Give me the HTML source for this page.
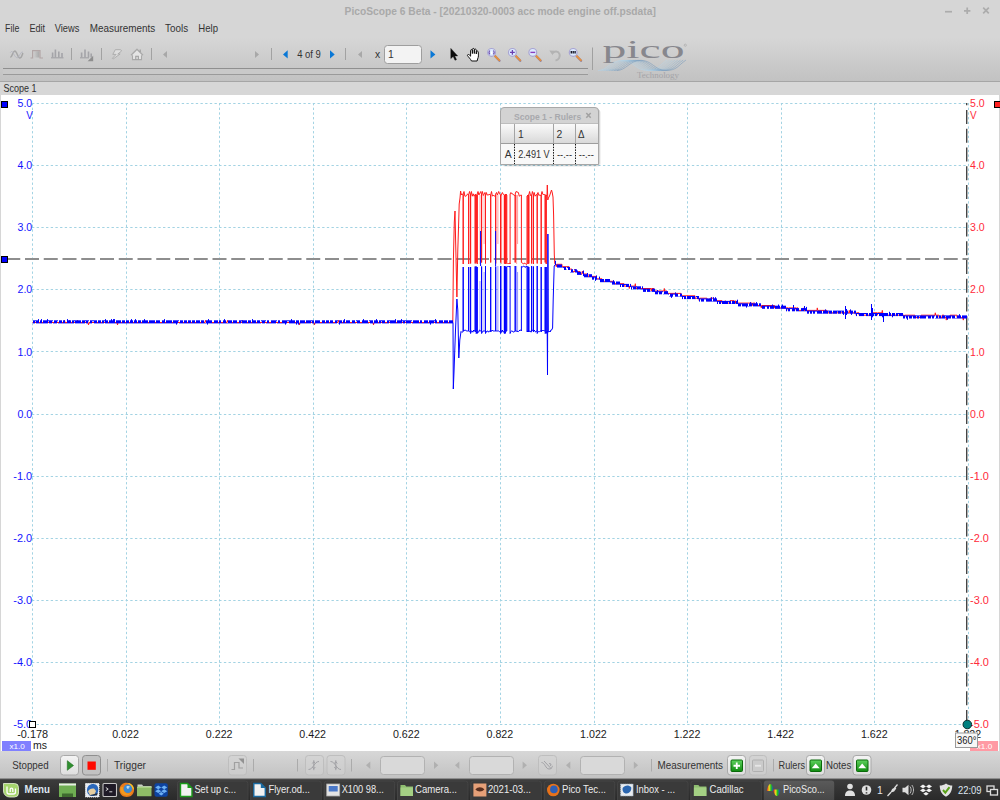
<!DOCTYPE html>
<html><head><meta charset="utf-8"><title>PicoScope 6 Beta</title>
<style>
html,body{margin:0;padding:0;background:#d6d6d6;}
body{width:1000px;height:800px;overflow:hidden;position:relative;font-family:"Liberation Sans",sans-serif;}
svg{position:absolute;left:0;top:0;display:block;font-family:"Liberation Sans",sans-serif;}
</style></head><body>
<svg width="1000" height="800" viewBox="0 0 1000 800">
<rect x="0" y="0" width="1000" height="800" fill="#d6d6d6"/>
<defs><linearGradient id="tb" x1="0" y1="0" x2="0" y2="1"><stop offset="0" stop-color="#d6d6d6"/><stop offset="1" stop-color="#c2c2c2"/></linearGradient><linearGradient id="sb" x1="0" y1="0" x2="0" y2="1"><stop offset="0" stop-color="#d7d7d7"/><stop offset="1" stop-color="#c1c1c1"/></linearGradient><linearGradient id="hd" x1="0" y1="0" x2="0" y2="1"><stop offset="0" stop-color="#fafafa"/><stop offset="1" stop-color="#d9d9d9"/></linearGradient><linearGradient id="btn" x1="0" y1="0" x2="0" y2="1"><stop offset="0" stop-color="#f4f4f4"/><stop offset="1" stop-color="#dedede"/></linearGradient><linearGradient id="rb" x1="0" y1="0" x2="1" y2="0"><stop offset="0" stop-color="#e02020"/><stop offset=".35" stop-color="#e8e020"/><stop offset=".6" stop-color="#20c020"/><stop offset="1" stop-color="#2030e0"/></linearGradient><linearGradient id="ab" x1="0" y1="0" x2="0" y2="1"><stop offset="0" stop-color="#5a5a5a"/><stop offset="1" stop-color="#474747"/></linearGradient><linearGradient id="sq" x1="0" y1="0" x2="1" y2="0"><stop offset="0" stop-color="#d0d0d0"/><stop offset="1" stop-color="#a8a8a8"/></linearGradient><linearGradient id="tk" x1="0" y1="0" x2="0" y2="1"><stop offset="0" stop-color="#3c3c3c"/><stop offset="1" stop-color="#2a2a2a"/></linearGradient><linearGradient id="grn" x1="0" y1="0" x2="0" y2="1"><stop offset="0" stop-color="#5fd35f"/><stop offset="1" stop-color="#0f8a0f"/></linearGradient></defs>
<rect x="0" y="38" width="1000" height="43" fill="url(#tb)"/>
<rect x="0" y="81" width="1000" height="1" fill="#a6a6a6"/>
<rect x="0" y="82" width="1000" height="13" fill="#d7d7d7"/>
<rect x="3" y="68" width="585" height="1" fill="#8f8f8f"/>
<rect x="3" y="69" width="585" height="5" fill="#c9c9c9"/>
<rect x="3" y="74" width="585" height="1" fill="#9a9a9a"/>
<rect x="1" y="95" width="998" height="656" fill="#ffffff"/>
<rect x="0" y="751" width="1000" height="29" fill="url(#sb)"/>
<rect x="0" y="778" width="1000" height="1" fill="#8e8e8e"/>
<rect x="0" y="779" width="1000" height="21" fill="url(#tk)"/>
<rect x="0" y="779" width="1000" height="1" fill="#4a4a4a"/>
<text x="344.6" y="15.1" font-size="10" fill="#a9a9a9" textLength="311.2" lengthAdjust="spacingAndGlyphs" font-weight="bold" >PicoScope 6 Beta - [20210320-0003 acc mode engine off.psdata]</text>
<g stroke="#acacac" stroke-width="1.7" fill="none"><path d="M945 11.7h7"/><path d="M964 10.8h6.4M967.2 7.6v6.4"/><path d="M983.2 7.7l5.6 5.6M988.8 7.7l-5.6 5.6"/></g>
<text x="5.1" y="31.8" font-size="10.4" fill="#333333" textLength="14.2" lengthAdjust="spacingAndGlyphs" >File</text>
<text x="29.4" y="31.8" font-size="10.4" fill="#333333" textLength="15.7" lengthAdjust="spacingAndGlyphs" >Edit</text>
<text x="54.7" y="31.8" font-size="10.4" fill="#333333" textLength="24.6" lengthAdjust="spacingAndGlyphs" >Views</text>
<text x="89.7" y="31.8" font-size="10.4" fill="#333333" textLength="65.5" lengthAdjust="spacingAndGlyphs" >Measurements</text>
<text x="165.1" y="31.8" font-size="10.4" fill="#333333" textLength="23.0" lengthAdjust="spacingAndGlyphs" >Tools</text>
<text x="198.3" y="31.8" font-size="10.4" fill="#333333" textLength="19.7" lengthAdjust="spacingAndGlyphs" >Help</text>
<text x="3.5" y="92.3" font-size="10.4" fill="#2e2e2e" textLength="33" lengthAdjust="spacingAndGlyphs" >Scope 1</text>
<g stroke="#a3d3e3" stroke-width="1" stroke-dasharray="2.34 2.34" fill="none"><path d="M32.0 103.5H969.0"/><path d="M32.0 165.5H969.0"/><path d="M32.0 227.5H969.0"/><path d="M32.0 289.5H969.0"/><path d="M32.0 351.5H969.0"/><path d="M32.0 414.5H969.0"/><path d="M32.0 476.5H969.0"/><path d="M32.0 538.5H969.0"/><path d="M32.0 600.5H969.0"/><path d="M32.0 662.5H969.0"/><path d="M32.0 724.5H969.0"/><path d="M32.5 103.0V725.0"/><path d="M126.5 103.0V725.0"/><path d="M219.5 103.0V725.0"/><path d="M313.5 103.0V725.0"/><path d="M406.5 103.0V725.0"/><path d="M500.5 103.0V725.0"/><path d="M594.5 103.0V725.0"/><path d="M687.5 103.0V725.0"/><path d="M781.5 103.0V725.0"/><path d="M874.5 103.0V725.0"/><path d="M968.5 103.0V725.0"/></g>
<text x="17.500000000000004" y="107.1" font-size="10.2" fill="#1414ff" textLength="14.7" lengthAdjust="spacingAndGlyphs" >5.0</text>
<text x="970" y="107.1" font-size="10.2" fill="#ff2a3a" textLength="14.7" lengthAdjust="spacingAndGlyphs" >5.0</text>
<text x="17.500000000000004" y="169.2" font-size="10.2" fill="#1414ff" textLength="14.7" lengthAdjust="spacingAndGlyphs" >4.0</text>
<text x="970" y="169.2" font-size="10.2" fill="#ff2a3a" textLength="14.7" lengthAdjust="spacingAndGlyphs" >4.0</text>
<text x="17.500000000000004" y="231.3" font-size="10.2" fill="#1414ff" textLength="14.7" lengthAdjust="spacingAndGlyphs" >3.0</text>
<text x="970" y="231.3" font-size="10.2" fill="#ff2a3a" textLength="14.7" lengthAdjust="spacingAndGlyphs" >3.0</text>
<text x="17.500000000000004" y="293.4" font-size="10.2" fill="#1414ff" textLength="14.7" lengthAdjust="spacingAndGlyphs" >2.0</text>
<text x="970" y="293.4" font-size="10.2" fill="#ff2a3a" textLength="14.7" lengthAdjust="spacingAndGlyphs" >2.0</text>
<text x="17.500000000000004" y="355.5" font-size="10.2" fill="#1414ff" textLength="14.7" lengthAdjust="spacingAndGlyphs" >1.0</text>
<text x="970" y="355.5" font-size="10.2" fill="#ff2a3a" textLength="14.7" lengthAdjust="spacingAndGlyphs" >1.0</text>
<text x="17.500000000000004" y="417.6" font-size="10.2" fill="#1414ff" textLength="14.7" lengthAdjust="spacingAndGlyphs" >0.0</text>
<text x="970" y="417.6" font-size="10.2" fill="#ff2a3a" textLength="14.7" lengthAdjust="spacingAndGlyphs" >0.0</text>
<text x="13.300000000000004" y="479.7" font-size="10.2" fill="#1414ff" textLength="18.9" lengthAdjust="spacingAndGlyphs" >-1.0</text>
<text x="970" y="479.7" font-size="10.2" fill="#ff2a3a" textLength="18.9" lengthAdjust="spacingAndGlyphs" >-1.0</text>
<text x="13.300000000000004" y="541.8" font-size="10.2" fill="#1414ff" textLength="18.9" lengthAdjust="spacingAndGlyphs" >-2.0</text>
<text x="970" y="541.8" font-size="10.2" fill="#ff2a3a" textLength="18.9" lengthAdjust="spacingAndGlyphs" >-2.0</text>
<text x="13.300000000000004" y="603.9" font-size="10.2" fill="#1414ff" textLength="18.9" lengthAdjust="spacingAndGlyphs" >-3.0</text>
<text x="970" y="603.9" font-size="10.2" fill="#ff2a3a" textLength="18.9" lengthAdjust="spacingAndGlyphs" >-3.0</text>
<text x="13.300000000000004" y="666.0" font-size="10.2" fill="#1414ff" textLength="18.9" lengthAdjust="spacingAndGlyphs" >-4.0</text>
<text x="970" y="666.0" font-size="10.2" fill="#ff2a3a" textLength="18.9" lengthAdjust="spacingAndGlyphs" >-4.0</text>
<text x="13.300000000000004" y="728.1" font-size="10.2" fill="#1414ff" textLength="18.9" lengthAdjust="spacingAndGlyphs" >-5.0</text>
<text x="970" y="728.1" font-size="10.2" fill="#ff2a3a" textLength="18.9" lengthAdjust="spacingAndGlyphs" >-5.0</text>
<text x="26.3" y="118.8" font-size="10.2" fill="#1414ff" textLength="6.6" lengthAdjust="spacingAndGlyphs" >V</text>
<text x="970" y="118.8" font-size="10.2" fill="#ff2a3a" textLength="6.6" lengthAdjust="spacingAndGlyphs" >V</text>
<text x="17.2" y="738.2" font-size="10.2" fill="#1a1a1a" textLength="30.9" lengthAdjust="spacingAndGlyphs" >-0.178</text>
<text x="112.2" y="738.2" font-size="10.2" fill="#1a1a1a" textLength="26.7" lengthAdjust="spacingAndGlyphs" >0.022</text>
<text x="205.8" y="738.2" font-size="10.2" fill="#1a1a1a" textLength="26.7" lengthAdjust="spacingAndGlyphs" >0.222</text>
<text x="299.3" y="738.2" font-size="10.2" fill="#1a1a1a" textLength="26.7" lengthAdjust="spacingAndGlyphs" >0.422</text>
<text x="392.9" y="738.2" font-size="10.2" fill="#1a1a1a" textLength="26.7" lengthAdjust="spacingAndGlyphs" >0.622</text>
<text x="486.5" y="738.2" font-size="10.2" fill="#1a1a1a" textLength="26.7" lengthAdjust="spacingAndGlyphs" >0.822</text>
<text x="580.1" y="738.2" font-size="10.2" fill="#1a1a1a" textLength="26.7" lengthAdjust="spacingAndGlyphs" >1.022</text>
<text x="673.7" y="738.2" font-size="10.2" fill="#1a1a1a" textLength="26.7" lengthAdjust="spacingAndGlyphs" >1.222</text>
<text x="767.3" y="738.2" font-size="10.2" fill="#1a1a1a" textLength="26.7" lengthAdjust="spacingAndGlyphs" >1.422</text>
<text x="860.9" y="738.2" font-size="10.2" fill="#1a1a1a" textLength="26.7" lengthAdjust="spacingAndGlyphs" >1.622</text>
<text x="954.5" y="738.2" font-size="10.2" fill="#1a1a1a" textLength="26.7" lengthAdjust="spacingAndGlyphs" >1.822</text>
<text x="33" y="748.8" font-size="10.2" fill="#1a1a1a" textLength="14" lengthAdjust="spacingAndGlyphs" >ms</text>
<rect x="2" y="741" width="29" height="10" fill="#8080ff"/>
<text x="9.5" y="748.7" font-size="7.8" fill="#ffffff" textLength="15.4" lengthAdjust="spacingAndGlyphs" >x1.0</text>
<rect x="970" y="741" width="28" height="10" fill="#ff9aa4"/>
<text x="976.8" y="748.7" font-size="7.8" fill="#ffffff" textLength="15.4" lengthAdjust="spacingAndGlyphs" >x1.0</text>
<path d="M6.25 259H968.5" stroke="#8e8e8e" stroke-width="2" stroke-dasharray="14 4.75" fill="none"/>
<path d="M966.7 103V724" stroke="#454545" stroke-width="1.4" stroke-dasharray="14 4.75" stroke-dashoffset="11.75" fill="none"/>
<path d="M480.0 195.0V264.0M484.1 195.0V244.0M497.9 195.0V244.0M501.6 195.0V264.0M516.6 195.0V264.0M517.6 195.0V244.0" stroke="#ff1a1a" stroke-width="1" fill="none" opacity=".4"/>
<polyline fill="none" stroke="#ff1a1a" stroke-width="1" stroke-linejoin="miter" points="32.5,322.5 64.0,322.5 64.5,320.3 65.0,322.5 69.0,322.5 69.5,320.3 70.0,322.5 77.0,322.5 77.5,320.3 78.0,322.5 88.0,322.5 88.5,324.9 89.0,322.5 117.0,322.5 117.5,324.9 118.0,322.5 205.0,322.5 205.5,320.3 206.0,322.5 227.0,322.5 227.5,320.3 228.0,322.5 242.0,322.5 242.5,320.3 243.0,322.5 299.0,322.5 299.5,324.9 300.0,322.5 314.0,322.5 314.5,324.9 315.0,322.5 338.0,322.5 338.5,320.3 339.0,322.5 373.0,322.5 373.5,324.9 374.0,322.5 452.8,322.5 453.4,260.0 454.3,222.0 455.0,211.0 455.6,240.0 456.9,297.0 457.8,250.0 458.7,222.0 459.2,204.0 460.0,198.0 460.6,191.0 461.3,195.0 462.1,193.8 463.2,195.0 463.2,264.0 463.2,194.0 464.0,191.5 464.9,196.2 465.8,196.2 466.7,195.5 467.6,193.8 468.7,195.0 468.7,264.0 468.7,195.0 469.5,191.5 470.6,195.0 470.6,263.5 470.6,196.0 471.4,191.5 472.3,196.2 473.2,193.8 474.1,196.2 475.2,195.0 475.2,263.5 475.2,194.0 476.2,195.0 476.2,262.5 476.2,195.0 477.2,195.0 477.2,264.0 477.2,194.0 478.0,191.5 478.9,195.0 480.8,191.5 481.6,195.0 481.6,262.5 481.6,195.0 482.4,191.5 483.3,195.5 484.9,192.5 485.5,195.0 485.5,263.5 485.5,196.0 486.3,192.5 487.2,195.0 488.1,195.0 489.0,194.5 489.9,194.5 490.7,195.0 490.7,262.5 490.7,195.0 491.5,191.5 492.4,196.2 493.3,195.0 494.2,196.2 495.1,195.5 495.7,195.0 495.7,263.5 495.7,194.0 496.5,192.5 497.4,195.0 498.7,191.5 499.6,193.8 500.6,195.0 500.6,262.5 500.6,196.0 502.4,192.5 503.3,194.5 504.4,195.0 504.4,263.5 504.4,196.0 505.2,195.0 505.2,264.0 505.2,194.0 506.0,195.0 506.0,264.0 506.0,194.0 506.8,195.0 506.8,262.5 507.6,263.5 508.4,263.5 509.2,263.5 510.0,263.0 510.1,264.0 510.1,194.0 510.9,192.5 511.8,193.8 512.7,193.8 513.6,195.0 514.5,195.5 515.2,195.0 515.2,262.5 515.2,194.0 516.0,191.5 518.4,192.5 519.3,196.2 520.2,195.5 521.1,195.0 521.4,195.0 521.4,262.5 522.2,263.0 523.0,263.5 523.8,264.0 524.6,263.0 525.4,263.5 526.2,264.5 527.0,264.0 527.0,264.0 527.0,196.0 528.0,195.0 528.0,264.0 528.0,195.0 528.8,195.0 528.8,263.5 528.8,195.0 529.6,191.5 530.5,195.5 531.6,195.0 531.6,263.5 531.6,196.0 532.4,191.5 533.4,195.0 533.4,264.0 533.4,196.0 534.2,192.5 535.1,196.2 536.0,195.0 536.9,194.5 537.2,195.0 537.2,263.5 537.2,194.0 538.0,192.5 538.9,195.5 539.8,195.0 540.7,195.5 541.2,195.0 541.2,264.0 541.2,195.0 542.0,191.5 542.9,194.5 543.8,194.5 544.7,194.5 545.2,195.0 545.2,262.5 545.2,195.0 546.2,195.0 546.2,264.0 546.2,196.0 547.0,195.0 547.3,185.0 547.8,200.0 548.4,198.0 549.5,196.0 550.5,193.0 551.5,190.0 552.3,193.0 553.0,197.0 553.6,215.0 554.3,255.0 554.8,263.5 555.0,264.3 556.0,264.3 556.3,266.7 556.6,264.3 557.0,264.3 558.0,264.3 559.0,264.3 560.0,264.3 561.0,264.3 562.0,264.3 562.0,266.7 563.0,266.7 564.0,266.7 565.0,266.7 566.0,266.7 567.0,266.7 568.0,266.7 569.0,266.7 569.0,269.1 570.0,269.1 571.0,269.1 572.0,269.1 572.0,271.6 573.0,271.6 574.0,271.6 575.0,271.6 575.3,269.1 575.6,271.6 576.0,271.6 577.0,271.6 578.0,271.6 579.0,271.6 580.0,271.6 580.0,274.0 581.0,274.0 582.0,274.0 582.0,271.6 583.0,271.6 583.0,274.0 584.0,274.0 585.0,274.0 586.0,274.0 587.0,274.0 588.0,274.0 588.0,276.4 589.0,276.4 590.0,276.4 591.0,276.4 592.0,276.4 593.0,276.4 594.0,276.4 595.0,276.4 596.0,276.4 596.0,278.8 597.0,278.8 598.0,278.8 599.0,278.8 600.0,278.8 601.0,278.8 602.0,278.8 602.0,281.3 603.0,281.3 604.0,281.3 605.0,281.3 606.0,281.3 607.0,281.3 608.0,281.3 609.0,281.3 610.0,281.3 611.0,281.3 612.0,281.3 613.0,281.3 614.0,281.3 614.0,283.7 615.0,283.7 616.0,283.7 617.0,283.7 618.0,283.7 619.0,283.7 620.0,283.7 621.0,283.7 622.0,283.7 623.0,283.7 624.0,283.7 624.0,286.1 625.0,286.1 626.0,286.1 627.0,286.1 628.0,286.1 629.0,286.1 629.3,288.5 629.6,286.1 630.0,286.1 631.0,286.1 632.0,286.1 633.0,286.1 634.0,286.1 635.0,286.1 635.3,283.7 635.6,286.1 636.0,286.1 636.0,288.5 637.0,288.5 638.0,288.5 639.0,288.5 640.0,288.5 641.0,288.5 642.0,288.5 643.0,288.5 644.0,288.5 645.0,288.5 646.0,288.5 647.0,288.5 648.0,288.5 649.0,288.5 650.0,288.5 651.0,288.5 651.3,291.0 651.6,288.5 652.0,288.5 653.0,288.5 654.0,288.5 654.0,291.0 655.0,291.0 656.0,291.0 657.0,291.0 658.0,291.0 659.0,291.0 660.0,291.0 661.0,291.0 662.0,291.0 663.0,291.0 664.0,291.0 664.3,288.5 664.6,291.0 665.0,291.0 666.0,291.0 667.0,291.0 667.0,293.4 668.0,293.4 669.0,293.4 670.0,293.4 671.0,293.4 672.0,293.4 673.0,293.4 674.0,293.4 675.0,293.4 676.0,293.4 677.0,293.4 678.0,293.4 679.0,293.4 680.0,293.4 681.0,293.4 681.0,295.8 682.0,295.8 683.0,295.8 684.0,295.8 685.0,295.8 686.0,295.8 687.0,295.8 688.0,295.8 689.0,295.8 690.0,295.8 691.0,295.8 692.0,295.8 693.0,295.8 694.0,295.8 695.0,295.8 695.0,298.2 696.0,298.2 697.0,298.2 698.0,298.2 699.0,298.2 699.3,300.7 699.6,298.2 700.0,298.2 701.0,298.2 702.0,298.2 703.0,298.2 704.0,298.2 705.0,298.2 706.0,298.2 707.0,298.2 707.0,300.7 708.0,300.7 709.0,300.7 710.0,300.7 710.0,298.2 711.0,298.2 712.0,298.2 713.0,298.2 714.0,298.2 714.0,300.7 715.0,300.7 716.0,300.7 717.0,300.7 718.0,300.7 719.0,300.7 720.0,300.7 721.0,300.7 722.0,300.7 722.0,303.1 723.0,303.1 724.0,303.1 725.0,303.1 725.3,300.7 725.6,303.1 726.0,303.1 727.0,303.1 728.0,303.1 729.0,303.1 730.0,303.1 730.0,300.7 731.0,300.7 732.0,300.7 733.0,300.7 734.0,300.7 734.0,303.1 735.0,303.1 735.3,300.7 735.6,303.1 736.0,303.1 737.0,303.1 738.0,303.1 739.0,303.1 740.0,303.1 741.0,303.1 742.0,303.1 743.0,303.1 744.0,303.1 745.0,303.1 746.0,303.1 747.0,303.1 748.0,303.1 749.0,303.1 750.0,303.1 751.0,303.1 752.0,303.1 752.3,305.5 752.6,303.1 753.0,303.1 754.0,303.1 755.0,303.1 755.0,305.5 756.0,305.5 757.0,305.5 758.0,305.5 759.0,305.5 760.0,305.5 761.0,305.5 761.3,307.9 761.6,305.5 762.0,305.5 763.0,305.5 764.0,305.5 765.0,305.5 766.0,305.5 767.0,305.5 768.0,305.5 769.0,305.5 770.0,305.5 771.0,305.5 772.0,305.5 772.3,307.9 772.6,305.5 773.0,305.5 774.0,305.5 774.0,307.9 774.3,305.5 774.6,307.9 775.0,307.9 776.0,307.9 777.0,307.9 778.0,307.9 779.0,307.9 780.0,307.9 781.0,307.9 782.0,307.9 783.0,307.9 784.0,307.9 785.0,307.9 786.0,307.9 787.0,307.9 788.0,307.9 788.3,310.4 788.6,307.9 789.0,307.9 790.0,307.9 791.0,307.9 792.0,307.9 793.0,307.9 794.0,307.9 795.0,307.9 796.0,307.9 796.3,310.4 796.6,307.9 797.0,307.9 798.0,307.9 798.0,310.4 799.0,310.4 800.0,310.4 801.0,310.4 802.0,310.4 803.0,310.4 803.3,307.9 803.6,310.4 804.0,310.4 805.0,310.4 806.0,310.4 807.0,310.4 808.0,310.4 809.0,310.4 810.0,310.4 811.0,310.4 812.0,310.4 813.0,310.4 814.0,310.4 815.0,310.4 816.0,310.4 817.0,310.4 817.3,307.9 817.6,310.4 818.0,310.4 819.0,310.4 820.0,310.4 821.0,310.4 822.0,310.4 823.0,310.4 824.0,310.4 825.0,310.4 826.0,310.4 827.0,310.4 827.0,312.8 828.0,312.8 829.0,312.8 830.0,312.8 831.0,312.8 832.0,312.8 833.0,312.8 834.0,312.8 835.0,312.8 836.0,312.8 837.0,312.8 838.0,312.8 839.0,312.8 840.0,312.8 841.0,312.8 842.0,312.8 843.0,312.8 844.0,312.8 845.0,312.8 846.0,312.8 847.0,312.8 848.0,312.8 849.0,312.8 849.3,310.4 849.6,312.8 850.0,312.8 851.0,312.8 852.0,312.8 853.0,312.8 854.0,312.8 855.0,312.8 856.0,312.8 856.3,315.2 856.6,312.8 857.0,312.8 858.0,312.8 859.0,312.8 859.0,315.2 860.0,315.2 861.0,315.2 862.0,315.2 863.0,315.2 864.0,315.2 865.0,315.2 866.0,315.2 867.0,315.2 868.0,315.2 869.0,315.2 870.0,315.2 871.0,315.2 872.0,315.2 873.0,315.2 873.0,312.8 874.0,312.8 875.0,312.8 876.0,312.8 877.0,312.8 877.3,315.2 877.6,312.8 878.0,312.8 879.0,312.8 880.0,312.8 881.0,312.8 882.0,312.8 882.3,310.4 882.6,312.8 883.0,312.8 883.0,315.2 884.0,315.2 885.0,315.2 886.0,315.2 887.0,315.2 888.0,315.2 889.0,315.2 890.0,315.2 891.0,315.2 892.0,315.2 893.0,315.2 894.0,315.2 895.0,315.2 896.0,315.2 897.0,315.2 898.0,315.2 899.0,315.2 900.0,315.2 901.0,315.2 902.0,315.2 903.0,315.2 904.0,315.2 904.3,317.6 904.6,315.2 905.0,315.2 906.0,315.2 907.0,315.2 908.0,315.2 909.0,315.2 910.0,315.2 911.0,315.2 912.0,315.2 913.0,315.2 914.0,315.2 915.0,315.2 915.0,317.6 916.0,317.6 917.0,317.6 918.0,317.6 919.0,317.6 920.0,317.6 921.0,317.6 921.0,315.2 922.0,315.2 923.0,315.2 924.0,315.2 925.0,315.2 926.0,315.2 927.0,315.2 928.0,315.2 929.0,315.2 930.0,315.2 931.0,315.2 932.0,315.2 933.0,315.2 934.0,315.2 935.0,315.2 935.3,312.8 935.6,315.2 936.0,315.2 937.0,315.2 938.0,315.2 939.0,315.2 939.0,317.6 940.0,317.6 941.0,317.6 942.0,317.6 942.0,315.2 943.0,315.2 944.0,315.2 944.0,317.6 945.0,317.6 946.0,317.6 946.3,320.1 946.6,317.6 947.0,317.6 948.0,317.6 949.0,317.6 950.0,317.6 950.0,315.2 951.0,315.2 952.0,315.2 953.0,315.2 954.0,315.2 955.0,315.2 956.0,315.2 957.0,315.2 957.0,317.6 958.0,317.6 959.0,317.6 960.0,317.6 961.0,317.6 962.0,317.6 963.0,317.6 963.3,320.1 963.6,317.6 964.0,317.6 965.0,317.6 966.0,317.6 967.0,317.6"/>
<path fill="none" stroke="#0000ff" stroke-width="1" d="M33.5 320.3V323.4M34.5 320.3V323.4M35.5 320.3V321.3M36.5 320.3V323.4M37.5 320.3V323.4M38.5 319.1V323.4M39.5 323.0V323.4M40.5 320.3V323.4M41.5 319.1V323.4M42.5 323.0V323.4M43.5 320.3V323.4M44.5 320.3V323.4M45.5 320.3V323.4M46.5 320.3V323.4M47.5 319.1V323.4M48.5 320.3V321.3M49.5 320.3V323.4M50.5 320.3V323.4M51.5 320.3V323.4M52.5 320.3V321.3M53.5 323.0V323.4M54.5 320.3V323.4M55.5 320.3V323.4M56.5 320.3V323.4M57.5 320.3V321.3M58.5 323.0V323.4M59.5 320.3V323.4M60.5 320.3V323.4M61.5 320.3V323.4M62.5 323.0V323.4M63.5 320.3V323.4M64.5 320.3V323.4M65.5 323.0V323.4M66.5 323.0V323.4M67.5 319.1V323.4M68.5 320.3V323.4M69.5 320.3V323.4M70.5 320.3V323.4M71.5 323.0V323.4M72.5 320.3V323.4M73.5 320.3V323.4M74.5 320.3V321.3M75.5 320.3V323.4M76.5 320.3V323.4M77.5 320.3V323.4M78.5 320.3V323.4M79.5 320.3V323.4M80.5 320.3V323.4M81.5 323.0V323.4M82.5 320.3V323.4M83.5 320.3V323.4M84.5 320.3V323.4M85.5 320.3V321.3M86.5 320.3V323.4M87.5 320.3V323.4M88.5 320.3V321.3M89.5 323.0V323.4M90.5 320.3V323.4M91.5 320.3V323.4M92.5 320.3V321.3M93.5 320.3V321.3M94.5 320.3V323.4M95.5 320.3V323.4M96.5 320.3V323.4M97.5 323.0V323.4M98.5 320.3V323.4M99.5 320.3V323.4M100.5 320.3V323.4M101.5 323.0V323.4M102.5 320.3V323.4M103.5 320.3V323.4M104.5 320.3V321.3M105.5 319.1V323.4M106.5 320.3V323.4M107.5 320.3V323.4M108.5 323.0V323.4M109.5 320.3V323.4M110.5 320.3V323.4M111.5 319.1V323.4M112.5 320.3V323.4M113.5 319.1V323.4M114.5 319.1V323.4M115.5 323.0V323.4M116.5 320.3V323.4M117.5 320.3V323.4M118.5 320.3V323.4M119.5 320.3V323.4M120.5 320.3V323.4M121.5 323.0V323.4M122.5 320.3V323.4M123.5 320.3V323.4M124.5 320.3V323.4M125.5 323.0V323.4M126.5 320.3V323.4M127.5 320.3V323.4M128.5 320.3V323.4M129.5 323.0V323.4M130.5 320.3V323.4M131.5 319.1V323.4M132.5 320.3V323.4M133.5 323.0V323.4M134.5 320.3V323.4M135.5 319.1V323.4M136.5 320.3V323.4M137.5 323.0V323.4M138.5 320.3V323.4M139.5 320.3V323.4M140.5 320.3V323.4M141.5 323.0V323.4M142.5 320.3V323.4M143.5 320.3V323.4M144.5 319.1V323.4M145.5 320.3V323.4M146.5 320.3V323.4M147.5 320.3V323.4M148.5 323.0V323.4M149.5 320.3V323.4M150.5 320.3V323.4M151.5 320.3V323.4M152.5 320.3V323.4M153.5 320.3V323.4M154.5 320.3V323.4M155.5 323.0V323.4M156.5 320.3V323.4M157.5 320.3V323.4M158.5 320.3V323.4M159.5 320.3V323.4M160.5 323.0V323.4M161.5 323.0V323.4M162.5 320.3V323.4M163.5 320.3V323.4M164.5 319.1V323.4M165.5 323.0V323.4M166.5 320.3V323.4M167.5 320.3V323.4M168.5 320.3V323.4M169.5 320.3V323.4M170.5 320.3V323.4M171.5 320.3V323.4M172.5 323.0V323.4M173.5 320.3V323.4M174.5 320.3V323.4M175.5 320.3V323.4M176.5 320.3V324.6M177.5 320.3V323.4M178.5 320.3V321.3M179.5 323.0V323.4M180.5 320.3V323.4M181.5 320.3V323.4M182.5 320.3V323.4M183.5 323.0V323.4M184.5 320.3V323.4M185.5 320.3V323.4M186.5 320.3V323.4M187.5 323.0V323.4M188.5 320.3V323.4M189.5 320.3V323.4M190.5 320.3V323.4M191.5 323.0V323.4M192.5 320.3V323.4M193.5 320.3V323.4M194.5 320.3V323.4M195.5 323.0V323.4M196.5 320.3V323.4M197.5 320.3V323.4M198.5 320.3V323.4M199.5 320.3V323.4M200.5 323.0V323.4M201.5 320.3V323.4M202.5 320.3V323.4M203.5 320.3V323.4M204.5 323.0V323.4M205.5 323.0V323.4M206.5 320.3V323.4M207.5 320.3V324.6M208.5 319.1V323.4M209.5 320.3V323.4M210.5 320.3V323.4M211.5 320.3V323.4M212.5 323.0V323.4M213.5 323.0V323.4M214.5 320.3V323.4M215.5 320.3V323.4M216.5 320.3V323.4M217.5 320.3V323.4M218.5 323.0V323.4M219.5 320.3V323.4M220.5 320.3V323.4M221.5 323.0V323.4M222.5 323.0V323.4M223.5 320.3V323.4M224.5 319.1V323.4M225.5 320.3V323.4M226.5 323.0V323.4M227.5 323.0V323.4M228.5 320.3V323.4M229.5 320.3V323.4M230.5 320.3V323.4M231.5 320.3V323.4M232.5 323.0V323.4M233.5 320.3V323.4M234.5 320.3V323.4M235.5 320.3V323.4M236.5 320.3V323.4M237.5 323.0V323.4M238.5 323.0V323.4M239.5 320.3V323.4M240.5 320.3V323.4M241.5 320.3V321.3M242.5 320.3V323.4M243.5 320.3V323.4M244.5 320.3V323.4M245.5 320.3V323.4M246.5 320.3V323.4M247.5 323.0V323.4M248.5 320.3V323.4M249.5 320.3V323.4M250.5 320.3V323.4M251.5 323.0V323.4M252.5 319.1V323.4M253.5 320.3V323.4M254.5 320.3V323.4M255.5 320.3V323.4M256.5 323.0V323.4M257.5 320.3V323.4M258.5 320.3V323.4M259.5 320.3V323.4M260.5 323.0V323.4M261.5 320.3V321.3M262.5 320.3V323.4M263.5 320.3V323.4M264.5 320.3V323.4M265.5 320.3V321.3M266.5 323.0V323.4M267.5 320.3V323.4M268.5 320.3V323.4M269.5 323.0V323.4M270.5 323.0V323.4M271.5 320.3V323.4M272.5 320.3V323.4M273.5 320.3V323.4M274.5 320.3V323.4M275.5 320.3V323.4M276.5 320.3V321.3M277.5 323.0V323.4M278.5 320.3V323.4M279.5 320.3V323.4M280.5 323.0V323.4M281.5 323.0V323.4M282.5 320.3V323.4M283.5 320.3V323.4M284.5 320.3V323.4M285.5 320.3V324.6M286.5 320.3V323.4M287.5 320.3V321.3M288.5 320.3V321.3M289.5 320.3V323.4M290.5 320.3V323.4M291.5 319.1V323.4M292.5 320.3V323.4M293.5 320.3V323.4M294.5 320.3V323.4M295.5 323.0V323.4M296.5 320.3V324.6M297.5 320.3V323.4M298.5 320.3V324.6M299.5 323.0V323.4M300.5 320.3V323.4M301.5 320.3V323.4M302.5 320.3V323.4M303.5 320.3V323.4M304.5 320.3V323.4M305.5 323.0V323.4M306.5 320.3V323.4M307.5 320.3V323.4M308.5 320.3V323.4M309.5 320.3V323.4M310.5 320.3V323.4M311.5 320.3V321.3M312.5 320.3V323.4M313.5 320.3V323.4M314.5 323.0V323.4M315.5 320.3V323.4M316.5 320.3V323.4M317.5 320.3V323.4M318.5 320.3V323.4M319.5 320.3V323.4M320.5 323.0V323.4M321.5 323.0V323.4M322.5 320.3V323.4M323.5 320.3V323.4M324.5 320.3V323.4M325.5 323.0V323.4M326.5 320.3V323.4M327.5 320.3V323.4M328.5 320.3V323.4M329.5 323.0V323.4M330.5 320.3V323.4M331.5 320.3V323.4M332.5 320.3V323.4M333.5 323.0V323.4M334.5 323.0V323.4M335.5 320.3V323.4M336.5 320.3V323.4M337.5 320.3V321.3M338.5 323.0V323.4M339.5 320.3V324.6M340.5 320.3V323.4M341.5 320.3V323.4M342.5 323.0V323.4M343.5 320.3V323.4M344.5 319.1V323.4M345.5 323.0V323.4M346.5 320.3V323.4M347.5 320.3V323.4M348.5 320.3V323.4M349.5 320.3V323.4M350.5 323.0V323.4M351.5 323.0V323.4M352.5 320.3V323.4M353.5 320.3V323.4M354.5 320.3V323.4M355.5 323.0V323.4M356.5 320.3V321.3M357.5 320.3V323.4M358.5 320.3V323.4M359.5 320.3V323.4M360.5 323.0V323.4M361.5 323.0V323.4M362.5 320.3V323.4M363.5 319.1V323.4M364.5 320.3V323.4M365.5 320.3V323.4M366.5 320.3V323.4M367.5 320.3V323.4M368.5 323.0V323.4M369.5 320.3V321.3M370.5 320.3V323.4M371.5 320.3V323.4M372.5 320.3V323.4M373.5 323.0V323.4M374.5 320.3V323.4M375.5 320.3V323.4M376.5 319.1V323.4M377.5 320.3V323.4M378.5 323.0V323.4M379.5 320.3V323.4M380.5 320.3V323.4M381.5 320.3V321.3M382.5 320.3V323.4M383.5 320.3V323.4M384.5 320.3V323.4M385.5 323.0V323.4M386.5 323.0V323.4M387.5 320.3V323.4M388.5 320.3V323.4M389.5 320.3V321.3M390.5 320.3V323.4M391.5 320.3V323.4M392.5 320.3V323.4M393.5 320.3V323.4M394.5 320.3V323.4M395.5 319.1V323.4M396.5 323.0V323.4M397.5 320.3V323.4M398.5 320.3V323.4M399.5 320.3V323.4M400.5 320.3V323.4M401.5 319.1V323.4M402.5 320.3V321.3M403.5 320.3V323.4M404.5 320.3V323.4M405.5 320.3V321.3M406.5 320.3V323.4M407.5 320.3V323.4M408.5 320.3V323.4M409.5 320.3V323.4M410.5 320.3V323.4M411.5 320.3V321.3M412.5 323.0V323.4M413.5 320.3V323.4M414.5 320.3V323.4M415.5 320.3V323.4M416.5 320.3V323.4M417.5 320.3V323.4M418.5 320.3V323.4M419.5 323.0V323.4M420.5 320.3V323.4M421.5 320.3V323.4M422.5 323.0V323.4M423.5 323.0V323.4M424.5 320.3V323.4M425.5 320.3V323.4M426.5 320.3V323.4M427.5 320.3V323.4M428.5 323.0V323.4M429.5 320.3V323.4M430.5 320.3V324.6M431.5 320.3V323.4M432.5 320.3V323.4M433.5 320.3V323.4M434.5 320.3V321.3M435.5 319.1V323.4M436.5 320.3V323.4M437.5 323.0V323.4M438.5 323.0V323.4M439.5 320.3V323.4M440.5 320.3V323.4M441.5 320.3V323.4M442.5 320.3V323.4M443.5 323.0V323.4M444.5 320.3V323.4M445.5 320.3V323.4M446.5 320.3V323.4M447.5 320.3V323.4M448.5 323.0V323.4M449.5 320.3V323.4M450.5 320.3V323.4M451.5 320.3V323.4M452.5 320.3V323.4M555.5 260.8V265.2M556.5 264.8V265.2M557.5 264.5V267.6M558.5 264.5V267.6M559.5 264.5V267.6M560.5 264.5V267.6M561.5 264.5V267.6M562.5 267.2V267.6M563.5 266.9V267.9M564.5 266.9V270.0M565.5 266.9V270.0M566.5 269.6V270.0M567.5 266.9V267.9M568.5 266.9V270.0M569.5 266.9V270.0M570.5 272.1V272.5M571.5 269.3V272.5M572.5 269.3V272.5M573.5 272.1V272.5M574.5 269.3V270.3M575.5 269.3V272.5M576.5 269.3V272.5M577.5 270.5V274.9M578.5 271.8V274.9M579.5 271.8V274.9M580.5 271.8V274.9M581.5 274.5V274.9M582.5 271.8V272.8M583.5 270.5V276.1M584.5 274.2V277.3M585.5 274.2V277.3M586.5 274.2V277.3M587.5 273.0V277.3M588.5 276.9V277.3M589.5 274.2V277.3M590.5 274.2V277.3M591.5 274.2V277.3M592.5 276.6V279.7M593.5 276.6V279.7M594.5 276.6V277.6M595.5 276.6V280.9M596.5 275.4V279.7M597.5 279.3V279.7M598.5 279.3V279.7M599.5 276.6V279.7M600.5 279.0V282.2M601.5 279.0V282.2M602.5 279.0V282.2M603.5 279.0V282.2M604.5 281.8V282.2M605.5 279.0V282.2M606.5 279.0V282.2M607.5 279.0V282.2M608.5 279.0V282.2M609.5 279.0V282.2M610.5 281.5V282.5M611.5 281.5V282.5M612.5 281.5V284.6M613.5 280.2V284.6M614.5 281.5V284.6M615.5 284.2V284.6M616.5 281.5V284.6M617.5 281.5V284.6M618.5 281.5V284.6M619.5 281.5V284.6M620.5 283.9V287.0M621.5 283.9V284.9M622.5 283.9V287.0M623.5 283.9V287.0M624.5 283.9V284.9M625.5 283.9V284.9M626.5 283.9V287.0M627.5 283.9V287.0M628.5 283.9V287.0M629.5 286.6V287.0M630.5 283.9V287.0M631.5 286.3V289.4M632.5 286.3V287.3M633.5 286.3V289.4M634.5 286.3V289.4M635.5 286.3V289.4M636.5 286.3V287.3M637.5 286.3V289.4M638.5 286.3V289.4M639.5 286.3V289.4M640.5 286.3V289.4M641.5 289.0V289.4M642.5 286.3V289.4M643.5 288.7V291.9M644.5 288.7V291.9M645.5 288.7V291.9M646.5 288.7V289.7M647.5 288.7V291.9M648.5 288.7V291.9M649.5 288.7V291.9M650.5 291.5V291.9M651.5 291.5V291.9M652.5 288.7V291.9M653.5 288.7V291.9M654.5 288.7V291.9M655.5 291.2V294.3M656.5 291.2V294.3M657.5 290.0V294.3M658.5 291.2V292.2M659.5 291.2V294.3M660.5 291.2V294.3M661.5 291.2V294.3M662.5 291.2V292.2M663.5 293.9V294.3M664.5 291.2V294.3M665.5 291.2V294.3M666.5 291.2V294.3M667.5 291.2V294.3M668.5 293.6V294.6M669.5 296.3V296.7M670.5 293.6V296.7M671.5 293.6V297.9M672.5 293.6V296.7M673.5 293.6V294.6M674.5 293.6V294.6M675.5 292.4V296.7M676.5 293.6V296.7M677.5 293.6V296.7M678.5 296.3V296.7M679.5 296.3V296.7M680.5 293.6V296.7M681.5 293.6V296.7M682.5 296.0V299.1M683.5 296.0V297.0M684.5 296.0V299.1M685.5 296.0V299.1M686.5 298.7V299.1M687.5 296.0V299.1M688.5 296.0V299.1M689.5 296.0V299.1M690.5 296.0V299.1M691.5 296.0V297.0M692.5 296.0V299.1M693.5 296.0V299.1M694.5 296.0V299.1M695.5 298.7V299.1M696.5 296.0V297.0M697.5 296.0V299.1M698.5 296.0V299.1M699.5 298.4V301.6M700.5 298.4V299.4M701.5 298.4V301.6M702.5 298.4V301.6M703.5 298.4V301.6M704.5 298.4V299.4M705.5 298.4V299.4M706.5 298.4V301.6M707.5 298.4V301.6M708.5 298.4V301.6M709.5 298.4V301.6M710.5 298.4V301.6M711.5 297.2V301.6M712.5 301.2V301.6M713.5 297.2V301.6M714.5 298.4V301.6M715.5 297.2V301.6M716.5 298.4V301.6M717.5 300.9V304.0M718.5 300.9V301.9M719.5 300.9V304.0M720.5 300.9V304.0M721.5 300.9V301.9M722.5 300.9V304.0M723.5 300.9V304.0M724.5 300.9V304.0M725.5 300.9V304.0M726.5 300.9V304.0M727.5 300.9V304.0M728.5 300.9V301.9M729.5 300.9V304.0M730.5 300.9V304.0M731.5 303.6V304.0M732.5 300.9V304.0M733.5 300.9V304.0M734.5 300.9V304.0M735.5 303.6V304.0M736.5 300.9V304.0M737.5 299.7V304.0M738.5 303.3V306.4M739.5 303.3V306.4M740.5 303.3V306.4M741.5 303.3V304.3M742.5 303.3V306.4M743.5 303.3V306.4M744.5 303.3V306.4M745.5 303.3V306.4M746.5 303.3V307.6M747.5 303.3V306.4M748.5 306.0V306.4M749.5 303.3V306.4M750.5 302.1V306.4M751.5 303.3V306.4M752.5 303.3V304.3M753.5 303.3V306.4M754.5 303.3V306.4M755.5 303.3V306.4M756.5 302.1V306.4M757.5 303.3V306.4M758.5 306.0V306.4M759.5 303.3V306.4M760.5 303.3V306.4M761.5 306.0V306.4M762.5 305.7V308.8M763.5 305.7V308.8M764.5 305.7V308.8M765.5 305.7V306.7M766.5 305.7V306.7M767.5 305.7V308.8M768.5 305.7V308.8M769.5 305.7V306.7M770.5 305.7V308.8M771.5 305.7V308.8M772.5 304.5V308.8M773.5 305.7V308.8M774.5 305.7V306.7M775.5 305.7V308.8M776.5 305.7V308.8M777.5 305.7V308.8M778.5 304.5V308.8M779.5 305.7V308.8M780.5 308.4V308.8M781.5 305.7V308.8M782.5 304.5V308.8M783.5 305.7V308.8M784.5 305.7V308.8M785.5 305.7V308.8M786.5 308.1V311.3M787.5 308.1V309.1M788.5 308.1V311.3M789.5 308.1V311.3M790.5 308.1V309.1M791.5 308.1V309.1M792.5 308.1V311.3M793.5 308.1V311.3M794.5 308.1V311.3M795.5 308.1V309.1M796.5 308.1V311.3M797.5 308.1V311.3M798.5 308.1V311.3M799.5 310.9V311.3M800.5 310.9V311.3M801.5 308.1V311.3M802.5 308.1V311.3M803.5 308.1V311.3M804.5 310.9V311.3M805.5 308.1V311.3M806.5 306.9V311.3M807.5 310.6V313.7M808.5 310.6V313.7M809.5 310.6V311.6M810.5 310.6V313.7M811.5 310.6V313.7M812.5 310.6V311.6M813.5 310.6V313.7M814.5 310.6V313.7M815.5 310.6V311.6M816.5 310.6V311.6M817.5 310.6V313.7M818.5 310.6V313.7M819.5 310.6V313.7M820.5 310.6V313.7M821.5 310.6V313.7M822.5 313.3V313.7M823.5 310.6V313.7M824.5 310.6V313.7M825.5 309.4V313.7M826.5 310.6V313.7M827.5 310.6V313.7M828.5 310.6V311.6M829.5 310.6V313.7M830.5 310.6V313.7M831.5 310.6V313.7M832.5 313.3V313.7M833.5 310.6V313.7M834.5 310.6V313.7M835.5 310.6V313.7M836.5 310.6V313.7M837.5 310.6V311.6M838.5 310.6V313.7M839.5 310.6V313.7M840.5 310.6V313.7M841.5 310.6V311.6M842.5 310.6V313.7M843.5 310.6V314.9M844.5 313.3V313.7M845.5 310.6V313.7M846.5 310.6V313.7M847.5 310.6V313.7M848.5 313.3V313.7M849.5 313.3V313.7M850.5 309.4V313.7M851.5 310.6V314.9M852.5 310.6V313.7M853.5 313.3V313.7M854.5 310.6V313.7M855.5 310.6V313.7M856.5 313.0V316.1M857.5 313.0V314.0M858.5 313.0V314.0M859.5 313.0V316.1M860.5 313.0V316.1M861.5 313.0V316.1M862.5 313.0V316.1M863.5 313.0V316.1M864.5 313.0V314.0M865.5 313.0V314.0M866.5 313.0V316.1M867.5 313.0V316.1M868.5 315.7V316.1M869.5 313.0V316.1M870.5 313.0V316.1M871.5 313.0V316.1M872.5 311.8V317.3M873.5 313.0V316.1M874.5 313.0V314.0M875.5 313.0V316.1M876.5 313.0V316.1M877.5 313.0V314.0M878.5 313.0V314.0M879.5 313.0V316.1M880.5 313.0V316.1M881.5 313.0V316.1M882.5 313.0V317.3M883.5 315.7V316.1M884.5 313.0V316.1M885.5 313.0V316.1M886.5 313.0V316.1M887.5 313.0V316.1M888.5 315.7V316.1M889.5 311.8V316.1M890.5 313.0V316.1M891.5 315.7V316.1M892.5 313.0V317.3M893.5 313.0V316.1M894.5 313.0V316.1M895.5 315.7V316.1M896.5 313.0V316.1M897.5 313.0V316.1M898.5 313.0V314.0M899.5 313.0V316.1M900.5 313.0V316.1M901.5 313.0V316.1M902.5 313.0V316.1M903.5 315.4V318.5M904.5 315.4V318.5M905.5 315.4V316.4M906.5 315.4V318.5M907.5 315.4V319.8M908.5 315.4V316.4M909.5 315.4V318.5M910.5 315.4V318.5M911.5 315.4V318.5M912.5 315.4V316.4M913.5 315.4V318.5M914.5 315.4V318.5M915.5 315.4V318.5M916.5 315.4V316.4M917.5 315.4V318.5M918.5 315.4V318.5M919.5 315.4V316.4M920.5 315.4V318.5M921.5 315.4V318.5M922.5 315.4V318.5M923.5 315.4V318.5M924.5 315.4V318.5M925.5 315.4V318.5M926.5 315.4V316.4M927.5 315.4V316.4M928.5 315.4V318.5M929.5 315.4V318.5M930.5 315.4V318.5M931.5 315.4V316.4M932.5 315.4V318.5M933.5 315.4V318.5M934.5 315.4V316.4M935.5 318.1V318.5M936.5 315.4V318.5M937.5 315.4V318.5M938.5 318.1V318.5M939.5 315.4V318.5M940.5 315.4V318.5M941.5 318.1V318.5M942.5 315.4V318.5M943.5 315.4V318.5M944.5 315.4V318.5M945.5 315.4V316.4M946.5 315.4V318.5M947.5 315.4V319.8M948.5 315.4V318.5M949.5 315.4V318.5M950.5 315.4V318.5M951.5 315.4V316.4M952.5 315.4V318.5M953.5 315.4V318.5M954.5 315.4V318.5M955.5 318.1V318.5M956.5 318.1V318.5M957.5 315.4V318.5M958.5 315.4V318.5M959.5 314.2V318.5M960.5 315.4V318.5M961.5 318.1V318.5M962.5 315.4V318.5M963.5 315.4V318.5M964.5 315.4V318.5M965.5 315.4V318.5M966.5 315.4V318.5"/>
<polyline fill="none" stroke="#0000ff" stroke-width="1" stroke-linejoin="round" points="452.5,322.5 453.0,322.5 453.3,389.0 454.0,372.0 455.5,330.0 456.9,299.0 457.8,310.0 458.8,358.0 459.8,340.0 461.0,331.5 461.7,332.2 462.5,332.2 463.2,331.0 463.2,267.0 463.2,331.0 463.9,331.0 464.7,330.0 465.5,330.0 466.3,331.0 467.1,331.0 467.9,331.0 468.7,331.0 468.7,267.0 468.7,331.0 469.4,331.6 470.2,331.6 470.6,331.0 470.6,267.0 470.6,333.5 471.3,331.0 472.1,331.0 472.9,332.2 473.7,330.0 474.5,331.0 475.2,331.0 475.2,266.5 475.2,332.0 476.2,331.0 476.2,266.5 476.2,333.5 477.2,331.0 477.2,267.0 477.2,333.5 477.9,331.6 478.7,332.2 479.5,330.0 480.7,331.0 481.6,331.0 481.6,266.5 481.6,333.5 482.3,332.2 483.1,331.0 484.8,331.0 485.5,331.0 485.5,266.0 485.5,333.5 486.2,332.2 487.0,331.0 487.8,331.0 488.6,332.2 489.4,331.0 490.2,331.0 490.7,331.0 490.7,267.0 490.7,332.0 491.4,331.0 492.2,330.0 493.0,331.0 493.8,331.0 494.6,331.0 495.7,331.0 495.7,266.5 495.7,331.0 496.4,331.0 497.2,331.0 498.6,331.0 499.4,331.6 500.2,331.6 500.6,331.0 500.6,266.0 500.6,333.5 502.3,330.0 503.1,332.2 503.9,331.6 504.4,331.0 504.4,266.0 504.4,333.5 505.2,331.0 505.2,266.5 505.2,333.5 506.0,331.0 506.0,266.5 506.0,331.0 506.8,331.0 506.8,267.0 507.6,266.5 508.4,266.5 509.2,267.0 510.0,266.0 510.1,266.0 510.1,333.5 510.8,331.6 511.6,331.0 512.4,331.0 513.2,332.2 514.0,331.6 514.8,331.6 515.2,331.0 515.2,266.0 515.2,331.0 515.9,331.0 518.3,331.6 519.1,331.0 519.9,330.0 520.7,330.0 521.4,331.0 521.4,266.5 522.2,267.0 523.0,266.5 523.8,266.0 524.6,267.0 525.4,267.5 526.2,266.0 527.0,266.5 527.0,266.0 527.0,332.0 528.0,331.0 528.0,266.5 528.0,332.0 528.8,331.0 528.8,267.0 528.8,332.0 529.5,331.0 530.3,331.0 531.1,332.2 531.6,331.0 531.6,266.0 531.6,331.0 532.3,330.0 533.4,331.0 533.4,266.5 533.4,332.0 534.1,330.0 534.9,331.0 535.7,332.2 536.5,331.0 537.2,331.0 537.2,266.0 537.2,333.5 537.9,331.6 538.7,331.6 539.5,331.6 540.3,331.0 541.2,331.0 541.2,267.0 541.2,332.0 541.9,330.0 542.7,331.0 543.5,330.0 544.3,331.0 545.2,331.0 545.2,267.0 545.2,333.5 546.2,331.0 546.2,267.0 546.2,333.5 547.2,331.0 547.5,375.0 547.9,234.0 548.3,332.0 548.8,332.0 549.5,331.0 550.2,332.0 550.9,330.0 551.6,330.0 552.6,328.0 553.2,300.0 554.2,266.0 555.0,265.0"/>
<path d="M480.0 331.0V281.0M484.1 331.0V272.0M497.9 331.0V266.0M501.6 331.0V266.0M516.6 331.0V266.0M517.6 331.0V272.0" stroke="#0000ff" stroke-width="1" fill="none" opacity=".4"/>
<path d="M480.6 266V231M495.6 266V231" stroke="#0000ff" stroke-width="1" fill="none"/>
<path d="M845.5 305.5V318.5M846.5 309V315M871.5 303.5V319.5M872.5 308V316M883.5 313V321.5M804.5 310V306M793.5 305V309" stroke="#0000ff" stroke-width="1" fill="none" shape-rendering="crispEdges"/>
<rect x="1.5" y="101.5" width="6" height="6" fill="#0000ff" stroke="#000" stroke-width="1"/>
<rect x="1.5" y="256.5" width="6" height="6" fill="#0000ff" stroke="#000" stroke-width="1"/>
<rect x="994.5" y="101.5" width="6" height="6" fill="#ff2020" stroke="#000" stroke-width="1"/>
<rect x="29.5" y="721.5" width="6" height="6" fill="#fff" stroke="#000" stroke-width="1"/>
<circle cx="967.3" cy="724.5" r="4.3" fill="#008080" stroke="#0a2a2a" stroke-width="1"/>
<rect x="955.5" y="733" width="22" height="14.5" fill="#f7f7f7" stroke="#9a9a9a" stroke-width="1"/>
<text x="957" y="743.6" font-size="10" fill="#1a1a1a" textLength="19.5" lengthAdjust="spacingAndGlyphs" >360°</text>
<path d="M10.3 57.2C12.3 57.2 12.8 51 14.8 51S17.8 58 19.8 58S22 54.5 23 53" stroke="#a6a6a6" stroke-width="1.5" fill="none"/>
<path d="M10.3 52.5C11.5 51 12.5 51 13.5 53.5S16.5 58.5 18 57.5S20.5 51.5 22.8 52" stroke="#b4b6c2" stroke-width=".9" fill="none"/>
<rect x="33.2" y="51.2" width="6.2" height="6.3" fill="url(#sq)"/>
<path d="M30.5 58H32.6V50.6H40V58H43" stroke="#b2a6a6" stroke-width="1.2" fill="none"/>
<path d="M51 57.8H63.5" stroke="#a4a4a8" stroke-width="1.2"/>
<rect x="51.8" y="52.5" width="1.6" height="5.0" fill="#a4a4a8"/>
<rect x="54.6" y="49.5" width="1.6" height="8.0" fill="#a4a4a8"/>
<rect x="58" y="51.5" width="1.6" height="6.0" fill="#a4a4a8"/>
<rect x="61.2" y="53" width="1.6" height="4.5" fill="#a4a4a8"/>
<path d="M71.5 48V60" stroke="#a2a2a2" stroke-width="1"/>
<path d="M101.5 48V60" stroke="#a2a2a2" stroke-width="1"/>
<path d="M151.5 48V60" stroke="#a2a2a2" stroke-width="1"/>
<path d="M271.5 48V60" stroke="#a2a2a2" stroke-width="1"/>
<path d="M345.5 48V60" stroke="#a2a2a2" stroke-width="1"/>
<path d="M80 57.8H89" stroke="#a4a4a8" stroke-width="1.2"/>
<rect x="80.8" y="52.5" width="1.6" height="5.0" fill="#a4a4a8"/>
<rect x="84.2" y="49.5" width="1.6" height="8.0" fill="#a4a4a8"/>
<rect x="87.7" y="51.5" width="1.6" height="6.0" fill="#a4a4a8"/>
<rect x="90.4" y="53.5" width="1.6" height="4.0" fill="#a4a4a8"/>
<path d="M93.2 55.8V61.2H87.6z" fill="#8e8e8e"/>
<path d="M115.3 49.7h5.3l1 1.3-3.8 3h2.3l-7 5-.8-.6 3.8-4h-3.3z" fill="#dedede" stroke="#a9a9a9" stroke-width=".9" stroke-linejoin="round"/>
<path d="M132.5 55v4.6h9V55" fill="#e4e4e4" stroke="#a9a9a9" stroke-width="1.1"/>
<path d="M131 55.3l6-6 6 6" fill="#e4e4e4" stroke="#a9a9a9" stroke-width="1.3" stroke-linejoin="round"/>
<path d="M135.8 59.6v-3.4h2.5v3.4M140.2 52v-2.6" stroke="#9c9c9c" stroke-width="1.1" fill="none"/>
<path d="M167 51v7l-4-3.5z" fill="#a8a8a8"/>
<path d="M255 51v7l4-3.5z" fill="#a8a8a8"/>
<path d="M362 51v7l-4-3.5z" fill="#a8a8a8"/>
<path d="M287.7 50.3v8.2l-4.7-4.1z" fill="#0a78d6"/>
<path d="M330 50.3v8.2l4.7-4.1z" fill="#0a78d6"/>
<path d="M430.5 50.3v8.2l4.9-4.1z" fill="#0a78d6"/>
<text x="297.2" y="58" font-size="10.4" fill="#333" textLength="23.7" lengthAdjust="spacingAndGlyphs" >4 of 9</text>
<text x="375" y="58" font-size="10.4" fill="#333" textLength="5.2" lengthAdjust="spacingAndGlyphs" >x</text>
<rect x="384.5" y="45.5" width="37" height="18" rx="3" fill="#f3f3f3" stroke="#9e9e9e" stroke-width="1"/>
<text x="388" y="58.3" font-size="10.4" fill="#333" >1</text>
<path d="M450.8 48.4V58.6L453.2 56.4L455 60.3L456.5 59.6L454.7 55.9H457.7Z" fill="#0c0c0c" stroke="#0c0c0c" stroke-width=".4"/>
<path d="M471.5 61C470.5 59 468.5 57 467.6 55.8C467 54.8 468.2 54 469.2 54.8L470.6 56.2V50.6C470.6 49.3 472.4 49.3 472.4 50.6V53.5V49.4C472.4 48.1 474.3 48.1 474.3 49.4V53.5V49.9C474.5 48.7 476.3 48.8 476.3 50.1V54V51.7C476.5 50.6 478.2 50.8 478.2 52C478.6 55 478.6 57 477.6 59L477.1 61Z" fill="#fff" stroke="#111" stroke-width="1" stroke-linejoin="round"/>
<path d="M495.20000000000005 56.2l4.3 4.5" stroke="#8c7c9c" stroke-width="2.3" stroke-linecap="round"/>
<path d="M494.90000000000003 55.8l4.3 4.4" stroke="#e8903c" stroke-width="1.9" stroke-linecap="round"/>
<circle cx="491.6" cy="52.4" r="3.9" fill="#dcebff" stroke="#a8a4d2" stroke-width="1.2"/>
<path d="M489.8 50.5c-1 1.2-1 2.6 0 3.8M493.40000000000003 50.5c1 1.2 1 2.6 0 3.8" stroke="#7050b0" stroke-width="1.1" fill="none"/><rect x="490.90000000000003" y="51.5" width="1.4" height="2.6" fill="#fff"/>
<path d="M516.0 56.2l4.3 4.5" stroke="#8c7c9c" stroke-width="2.3" stroke-linecap="round"/>
<path d="M515.6999999999999 55.8l4.3 4.4" stroke="#e8903c" stroke-width="1.9" stroke-linecap="round"/>
<circle cx="512.4" cy="52.4" r="3.9" fill="#dcebff" stroke="#a8a4d2" stroke-width="1.2"/>
<path d="M510.0 52.4h4.8M512.4 50v4.8" stroke="#6a3fb0" stroke-width="1.3"/>
<path d="M536.4 56.2l4.3 4.5" stroke="#8c7c9c" stroke-width="2.3" stroke-linecap="round"/>
<path d="M536.0999999999999 55.8l4.3 4.4" stroke="#e8903c" stroke-width="1.9" stroke-linecap="round"/>
<circle cx="532.8" cy="52.4" r="3.9" fill="#dcebff" stroke="#a8a4d2" stroke-width="1.2"/>
<path d="M530.4 52.4h4.8" stroke="#8a3fc0" stroke-width="1.4"/>
<path d="M576.8000000000001 56.2l4.3 4.5" stroke="#8c7c9c" stroke-width="2.3" stroke-linecap="round"/>
<path d="M576.5 55.8l4.3 4.4" stroke="#e8903c" stroke-width="1.9" stroke-linecap="round"/>
<circle cx="573.2" cy="52.4" r="3.9" fill="#dcebff" stroke="#a8a4d2" stroke-width="1.2"/>
<path d="M570.6 52.2h5.2" stroke="#1a1a2a" stroke-width="2.4" stroke-dasharray="1.4 .5"/>
<path d="M552 53.5c2.5-3 6.5-2.5 7.5 .5s-1 6-4 6.5" stroke="#b3b3b3" stroke-width="2" fill="none"/><path d="M549.3 50.5l4.8 .3-1.5 4.5z" fill="#b3b3b3"/>
<path d="M592.5 47.5V70" stroke="#a0a0a0" stroke-width="1"/>
<g stroke-width=".6" fill="none" opacity=".85"><path stroke="#b4d6ec" d="M598.0 70.5c9 0 13-10.2 24-10.2s14 10.2 25 10.2s12-5 20-10.4"/><path stroke="#aed2ea" d="M600.7 70.5c9 0 13-10.2 24-10.2s14 10.2 25 10.2s12-5 20-10.4"/><path stroke="#a6cce6" d="M603.4 70.5c9 0 13-10.2 24-10.2s14 10.2 25 10.2s12-5 20-10.4"/><path stroke="#9cc4e0" d="M606.1 70.5c9 0 13-10.2 24-10.2s14 10.2 25 10.2s12-5 20-10.4"/><path stroke="#8fb8d8" d="M608.8 70.5c9 0 13-10.2 24-10.2s14 10.2 25 10.2s12-5 20-10.4"/><path stroke="#82acce" d="M611.5 70.5c9 0 13-10.2 24-10.2s14 10.2 25 10.2s12-5 20-10.4"/><path stroke="#769fc4" d="M614.2 70.5c9 0 13-10.2 24-10.2s14 10.2 25 10.2s12-5 20-10.4"/><path stroke="#6c94ba" d="M616.9 70.5c9 0 13-10.2 24-10.2s14 10.2 25 10.2s12-5 20-10.4"/></g>
<text x="602.5" y="57.5" font-size="25" fill="#87878d" textLength="82" lengthAdjust="spacingAndGlyphs" font-family="'Liberation Serif',serif" >pico</text>
<circle cx="685.3" cy="45.2" r="1.1" fill="none" stroke="#9a9a9a" stroke-width=".5"/>
<text x="637" y="78" font-size="8" fill="#a4a4a8" textLength="42" lengthAdjust="spacingAndGlyphs" font-family="'Liberation Serif',serif" >Technology</text>
<rect x="502" y="109.5" width="98.5" height="57" rx="3" fill="#000" opacity=".10"/>
<rect x="501.5" y="108.5" width="98" height="57" rx="3" fill="#000" opacity=".13"/>
<path d="M500.5 164.5V111a3.5 3.5 0 0 1 3.5-3.5h91a3.5 3.5 0 0 1 3.5 3.5V164.5z" fill="#d3d3d3" stroke="#a8a8a8" stroke-width="1"/>
<text x="514" y="119.8" font-size="9.8" fill="#a8a9ad" textLength="67.2" lengthAdjust="spacingAndGlyphs" font-weight="bold" >Scope 1 - Rulers</text>
<path d="M586.3 113l4.4 4.8M590.7 113l-4.4 4.8" stroke="#a2a2a2" stroke-width="1.5"/>
<rect x="501" y="124" width="97" height="19" fill="url(#hd)"/>
<rect x="501" y="143" width="97" height="21" fill="#f8f8f8"/>
<path d="M501 143.5H598" stroke="#9d9d9d" stroke-width="1"/>
<path d="M501 123.5H598" stroke="#bdbdbd" stroke-width="1"/>
<path d="M514.5 124V143" stroke="#a4a4a4" stroke-width="1"/>
<path d="M514.5 144V164" stroke="#111" stroke-width="1" stroke-dasharray="1.5 1.2"/>
<path d="M553.5 124V143" stroke="#a4a4a4" stroke-width="1"/>
<path d="M553.5 144V164" stroke="#111" stroke-width="1" stroke-dasharray="1.5 1.2"/>
<path d="M575.5 124V143" stroke="#a4a4a4" stroke-width="1"/>
<path d="M575.5 144V164" stroke="#111" stroke-width="1" stroke-dasharray="1.5 1.2"/>
<text x="518" y="138" font-size="10.4" fill="#333" >1</text>
<text x="556.5" y="138" font-size="10.4" fill="#333" >2</text>
<text x="578" y="138" font-size="10.4" fill="#333" textLength="6.5" lengthAdjust="spacingAndGlyphs" >Δ</text>
<text x="504.8" y="157.8" font-size="10.4" fill="#333" >A</text>
<text x="518.2" y="157.8" font-size="10.4" fill="#333" textLength="31.5" lengthAdjust="spacingAndGlyphs" >2.491 V</text>
<text x="557" y="157.8" font-size="10.4" fill="#333" textLength="15" lengthAdjust="spacingAndGlyphs" >--.--</text>
<text x="578.8" y="157.8" font-size="10.4" fill="#333" textLength="15" lengthAdjust="spacingAndGlyphs" >--.--</text>
<text x="12.3" y="769.2" font-size="10.4" fill="#333333" textLength="36.3" lengthAdjust="spacingAndGlyphs" >Stopped</text>
<rect x="60.5" y="755.5" width="18" height="19.5" rx="3" fill="url(#btn)" stroke="#a9a9a9"/>
<path d="M67.3 760.7l6.2 4.8-6.2 4.8z" fill="#2f8f2f" stroke="#1f6f1f" stroke-width=".6"/>
<rect x="82.5" y="755.5" width="18" height="19.5" rx="3" fill="#c2c2c2" stroke="#8f8f8f"/>
<rect x="87.5" y="761.5" width="8.3" height="8.3" fill="#ff0a00"/>
<path d="M107.5 759V771.5" stroke="#ababab" stroke-width="1"/>
<path d="M253.5 759V771.5" stroke="#ababab" stroke-width="1"/>
<path d="M297.5 759V771.5" stroke="#ababab" stroke-width="1"/>
<path d="M351.5 759V771.5" stroke="#ababab" stroke-width="1"/>
<path d="M651.5 759V771.5" stroke="#ababab" stroke-width="1"/>
<path d="M773.5 759V771.5" stroke="#ababab" stroke-width="1"/>
<text x="114" y="769.2" font-size="10.4" fill="#333333" textLength="32" lengthAdjust="spacingAndGlyphs" >Trigger</text>
<rect x="228.5" y="755.5" width="18" height="19.5" rx="3" fill="#d4d4d4" fill-opacity=".5" stroke="#bebebe"/>
<path d="M231.5 769.5h3v-7h4.5v5.5h4" stroke="#a0a0a0" stroke-width="1.2" fill="none"/><path d="M238.5 758.5h5.5v5.5z" fill="#929292"/>
<rect x="305.5" y="755.5" width="18" height="19.5" rx="3" fill="#d4d4d4" fill-opacity=".5" stroke="#bebebe"/>
<rect x="327" y="755.5" width="18" height="19.5" rx="3" fill="#d4d4d4" fill-opacity=".5" stroke="#bebebe"/>
<path d="M308.5 769.5c5 0 5.5-8 10.5-8M313.8 760.2v10M312.3 763.5l1.5-1.8 1.5 1.8M312.3 767l1.5 1.8 1.5-1.8" stroke="#a2a2a6" stroke-width="1" fill="none"/>
<path d="M330.5 761.5c5 0 5.5 8 10.5 8M335.8 760.2v10M334.3 763.5l1.5-1.8 1.5 1.8M334.3 767l1.5 1.8 1.5-1.8" stroke="#a2a2a6" stroke-width="1" fill="none"/>
<rect x="538.5" y="755.5" width="18" height="19.5" rx="3" fill="#d4d4d4" fill-opacity=".5" stroke="#bebebe"/>
<path d="M541.5 762.5c3.5 0 4 6.5 7.5 6.5s2.5-3 4-3M544 761l7.5 8M549 763.5l2 .5-.5 2" stroke="#a2a2a6" stroke-width="1" fill="none"/>
<path d="M370.3 761.5v7.5l-4.3-3.75z" fill="#b0b0b0"/>
<rect x="380.5" y="756.5" width="44" height="18" rx="3" fill="#d9d9d9" stroke="#b2b2b2"/>
<path d="M434 761.5v7.5l4.3-3.75z" fill="#b0b0b0"/>
<path d="M459.3 761.5v7.5l-4.3-3.75z" fill="#b0b0b0"/>
<rect x="469.5" y="756.5" width="44" height="18" rx="3" fill="#d9d9d9" stroke="#b2b2b2"/>
<path d="M522.6 761.5v7.5l4.3-3.75z" fill="#b0b0b0"/>
<path d="M570.3 761.5v7.5l-4.3-3.75z" fill="#b0b0b0"/>
<rect x="580.5" y="756.5" width="44" height="18" rx="3" fill="#d9d9d9" stroke="#b2b2b2"/>
<path d="M633.8 761.5v7.5l4.3-3.75z" fill="#b0b0b0"/>
<text x="657.6" y="769.2" font-size="10.4" fill="#333333" textLength="65.4" lengthAdjust="spacingAndGlyphs" >Measurements</text>
<rect x="727.5" y="755.5" width="18" height="19.5" rx="3" fill="url(#btn)" stroke="#a9a9a9"/>
<rect x="731" y="760" width="11.5" height="11.5" rx="1" fill="url(#grn)" stroke="#0a6a0a" stroke-width="1"/>
<path d="M733.5 765.75h6.5M736.75 762.5v6.5" stroke="#fff" stroke-width="1.8"/>
<rect x="749.5" y="755.5" width="17" height="19.5" rx="3" fill="#d4d4d4" fill-opacity=".5" stroke="#bebebe"/>
<rect x="752.5" y="760" width="11" height="11.5" rx="1" fill="#cbcbcb" stroke="#b0b0b0"/><path d="M755 765.75h6" stroke="#e6e6e6" stroke-width="1.8"/>
<text x="778.6" y="769.2" font-size="10.4" fill="#333333" textLength="26.4" lengthAdjust="spacingAndGlyphs" >Rulers</text>
<rect x="806.5" y="755.5" width="18" height="19.5" rx="3" fill="url(#btn)" stroke="#a9a9a9"/>
<rect x="810.0" y="760" width="11.5" height="11.5" rx="1" fill="url(#grn)" stroke="#0a6a0a" stroke-width="1"/>
<path d="M811.7 768.2l4-4.7 4 4.7z" fill="#fff"/>
<text x="826" y="769.2" font-size="10.4" fill="#333333" textLength="25.3" lengthAdjust="spacingAndGlyphs" >Notes</text>
<rect x="853" y="755.5" width="18" height="19.5" rx="3" fill="url(#btn)" stroke="#a9a9a9"/>
<rect x="856.5" y="760" width="11.5" height="11.5" rx="1" fill="url(#grn)" stroke="#0a6a0a" stroke-width="1"/>
<path d="M858.2 768.2l4-4.7 4 4.7z" fill="#fff"/>
<path d="M3.5 783.5h11a4 4 0 0 1 4 4v5.5a4 4 0 0 1-4 4h-5a6 6 0 0 1-6-6z" fill="#a6d46e" stroke="#e8f4d8" stroke-width=".8"/>
<path d="M7 786.5v5.5a2 2 0 0 0 2 2h4.5a2 2 0 0 0 2-2v-3.5M10.2 792v-2.6a1.3 1.3 0 0 1 2.6 0V792" stroke="#fff" stroke-width="1.3" fill="none"/>
<text x="24.5" y="793.4" font-size="10.5" fill="#dfe8f2" textLength="25.5" lengthAdjust="spacingAndGlyphs" font-weight="bold" >Menu</text>
<rect x="59" y="783.5" width="17" height="13.5" fill="#6fae52"/><rect x="59" y="783.5" width="17" height="2" fill="#e8efe4"/><rect x="62" y="793.5" width="11" height="3.5" fill="#3f6a2f"/>
<rect x="85.5" y="783.5" width="13.5" height="13.5" fill="#e8edf2" stroke="#f4f6f8" stroke-width="1" stroke-dasharray="1.2 .8"/><path d="M87 790c0-4 3-6.2 6.5-6 3 .2 4.8 2.5 4.8 5.5 0 4-2.5 6.5-5.8 6.5-3.2 0-5.5-2.5-5.5-6z" fill="#2a68bc"/><path d="M88 791.5c1-2.5 3.5-3.5 6-3l2 2.5-1.5 3.5-4.5 .5z" fill="#e6cfa0"/><path d="M88.5 795.5h8.5l.8-2.5-5 1.5z" fill="#27303c"/>
<rect x="103" y="783.5" width="13.5" height="13" rx="1" fill="#1e1a26" stroke="#c4c4c4" stroke-width="1.1"/><path d="M105.8 787.5l2.4 1.6-2.4 1.6M109.3 791.8h3" stroke="#e8e8e8" stroke-width=".9" fill="none"/>
<path d="M119.5 790c0-4.5 3-7.2 7.2-7.2 4.5 0 7.3 3 7.3 7.2s-3 7-7.3 7c-4.2 0-7.2-2.8-7.2-7z" fill="#e97a1a"/><path d="M128 783c3.5 .5 6 3 6 7l-2.5-3z" fill="#f7c628"/><circle cx="127.8" cy="788.8" r="4.3" fill="#3c8ad4"/><path d="M123.5 786.5c-1 3 .5 6 3.5 6.8 2.5 .6 4.5-.5 5.5-2-1.5 3.5-5 5-8.5 3.7-3.5-1.5-4.5-5.5-3-8.5.6 1 1.5 1 2.5 0z" fill="#f29a1f"/><path d="M126.5 786.5c1.5-.8 3-.5 3.8 .8-1.5-.3-2 .5-1.5 1.5-1.5 .2-2.5-.8-2.3-2.3z" fill="#bfe0f4"/>
<path d="M137.5 784.5h4.5l1.2 1.5h8.3v1.5h-14z" fill="#c9cfc4"/><rect x="137" y="786.8" width="14.5" height="9.5" rx=".6" fill="#8fbc67"/><rect x="137" y="786.8" width="14.5" height="1.2" fill="#a9d182"/>
<rect x="154.5" y="783.3" width="13.3" height="13.5" rx="2" fill="#0d43a0"/><path d="M158.2 785.5l3 1.9-3 1.9-3-1.9zM164.2 785.5l3 1.9-3 1.9-3-1.9zM158.2 789.3l3 1.9-3 1.9-3-1.9zM164.2 789.3l3 1.9-3 1.9-3-1.9zM161.2 792l2.6 1.7-2.6 1.7-2.6-1.7z" fill="#6db0f4"/>
<path d="M177.0 800v-16.5a3 3 0 0 1 3-3h64.4a3 3 0 0 1 3 3V800z" fill="#3a3a3a"/>
<path d="M177.5 800v-16.5a2.5 2.5 0 0 1 2.5-2.5h65.4a2.5 2.5 0 0 1 2.5 2.5V800" fill="none" stroke="#454545" stroke-width="1"/>
<path d="M180.5 783.5h7l4.5 4.5v8.5h-11.5z" fill="#f2f2f2" stroke="#1a9a1a" stroke-width="1.4"/><path d="M187.5 783.5v4.5h4.5" fill="#1a9a1a"/>
<text x="194.4" y="792.8" font-size="10.4" fill="#ececec" textLength="41.6" lengthAdjust="spacingAndGlyphs" >Set up c...</text>
<path d="M250.3 800v-16.5a3 3 0 0 1 3-3h64.4a3 3 0 0 1 3 3V800z" fill="#3a3a3a"/>
<path d="M250.8 800v-16.5a2.5 2.5 0 0 1 2.5-2.5h65.4a2.5 2.5 0 0 1 2.5 2.5V800" fill="none" stroke="#454545" stroke-width="1"/>
<path d="M253.8 783.5h7l4.5 4.5v8.5h-11.5z" fill="#f2f2f2" stroke="#1a6aa0" stroke-width="1.4"/><path d="M260.8 783.5v4.5h4.5" fill="#1a6aa0"/>
<text x="268.4" y="792.8" font-size="10.4" fill="#ececec" textLength="41.6" lengthAdjust="spacingAndGlyphs" >Flyer.od...</text>
<path d="M323.7 800v-16.5a3 3 0 0 1 3-3h64.4a3 3 0 0 1 3 3V800z" fill="#3a3a3a"/>
<path d="M324.2 800v-16.5a2.5 2.5 0 0 1 2.5-2.5h65.4a2.5 2.5 0 0 1 2.5 2.5V800" fill="none" stroke="#454545" stroke-width="1"/>
<rect x="326.7" y="784" width="13" height="12" fill="#e4e4e4" stroke="#aaa" stroke-width=".8"/><rect x="328.7" y="786" width="9" height="5.5" fill="#4a78c8"/>
<text x="341.7" y="792.8" font-size="10.4" fill="#ececec" textLength="42.1" lengthAdjust="spacingAndGlyphs" >X100 98...</text>
<path d="M397.0 800v-16.5a3 3 0 0 1 3-3h64.4a3 3 0 0 1 3 3V800z" fill="#3a3a3a"/>
<path d="M397.5 800v-16.5a2.5 2.5 0 0 1 2.5-2.5h65.4a2.5 2.5 0 0 1 2.5 2.5V800" fill="none" stroke="#454545" stroke-width="1"/>
<path d="M400.5 785h4.5l1.2 1.5h6.8v9.5h-12.5z" fill="#8fbe70"/><rect x="400.5" y="787.5" width="12.5" height="8.5" fill="#a4d084"/>
<text x="415" y="792.8" font-size="10.4" fill="#ececec" textLength="42" lengthAdjust="spacingAndGlyphs" >Camera...</text>
<path d="M470.4 800v-16.5a3 3 0 0 1 3-3h64.4a3 3 0 0 1 3 3V800z" fill="#3a3a3a"/>
<path d="M470.9 800v-16.5a2.5 2.5 0 0 1 2.5-2.5h65.4a2.5 2.5 0 0 1 2.5 2.5V800" fill="none" stroke="#454545" stroke-width="1"/>
<rect x="473.4" y="783.5" width="13" height="13" fill="#e6a078"/><path d="M475.4 789.5c2.5-3 6.5-3 9 0-2.5 2.5-6.5 2.5-9 0z" fill="#5a3020"/>
<text x="488" y="792.8" font-size="10.4" fill="#ececec" textLength="43" lengthAdjust="spacingAndGlyphs" >2021-03...</text>
<path d="M543.8 800v-16.5a3 3 0 0 1 3-3h64.4a3 3 0 0 1 3 3V800z" fill="#3a3a3a"/>
<path d="M544.3 800v-16.5a2.5 2.5 0 0 1 2.5-2.5h65.4a2.5 2.5 0 0 1 2.5 2.5V800" fill="none" stroke="#454545" stroke-width="1"/>
<circle cx="553.3" cy="790" r="6.3" fill="#e8721a"/><circle cx="553.9" cy="789.4" r="3.8" fill="#2f5fb5"/>
<text x="562" y="792.8" font-size="10.4" fill="#ececec" textLength="44" lengthAdjust="spacingAndGlyphs" >Pico Tec...</text>
<path d="M617.1 800v-16.5a3 3 0 0 1 3-3h64.4a3 3 0 0 1 3 3V800z" fill="#3a3a3a"/>
<path d="M617.6 800v-16.5a2.5 2.5 0 0 1 2.5-2.5h65.4a2.5 2.5 0 0 1 2.5 2.5V800" fill="none" stroke="#454545" stroke-width="1"/>
<rect x="620.6" y="784" width="12.5" height="12" fill="#e8ecf0" stroke="#9ab" stroke-width="1" stroke-dasharray="1 1"/><path d="M622.6 788c2-3 6-3.5 8.5-1 .8 3-1 6-4.5 6.5-2.5.2-4.5-2-4-5.5z" fill="#2a66b0"/>
<text x="636" y="792.8" font-size="10.4" fill="#ececec" textLength="39" lengthAdjust="spacingAndGlyphs" >Inbox - ...</text>
<path d="M690.4 800v-16.5a3 3 0 0 1 3-3h64.4a3 3 0 0 1 3 3V800z" fill="#3a3a3a"/>
<path d="M690.9 800v-16.5a2.5 2.5 0 0 1 2.5-2.5h65.4a2.5 2.5 0 0 1 2.5 2.5V800" fill="none" stroke="#454545" stroke-width="1"/>
<path d="M693.9 785h4.5l1.2 1.5h6.8v9.5h-12.5z" fill="#8fbe70"/><rect x="693.9" y="787.5" width="12.5" height="8.5" fill="#a4d084"/>
<text x="709.6" y="792.8" font-size="10.4" fill="#ececec" textLength="33.9" lengthAdjust="spacingAndGlyphs" >Cadillac</text>
<path d="M763.8 800v-16.5a3 3 0 0 1 3-3h64.4a3 3 0 0 1 3 3V800z" fill="url(#ab)"/>
<path d="M766.8 791c.5-4 2-7 3.5-7s3 3 3.5 7z" fill="url(#rb)"/><path d="M773.3 789.5c.5 4 2 6.5 3.5 6.5s3-2.5 3.5-6.5z" fill="url(#rb)"/>
<text x="783" y="792.8" font-size="10.4" fill="#ececec" textLength="41.6" lengthAdjust="spacingAndGlyphs" >PicoSco...</text>
<circle cx="850" cy="786.5" r="2.8" fill="#e0e0e0"/><path d="M845 796c0-4 2-5.5 5-5.5s5 1.5 5 5.5z" fill="#e0e0e0"/>
<circle cx="866.5" cy="790" r="4.8" fill="#e0e0e0"/><path d="M866.5 786.8v3.8M866.5 792.2v1.3" stroke="#2c2c2c" stroke-width="1.6"/>
<text x="877" y="794" font-size="10.4" fill="#e6e6e6" >1</text>
<path d="M887.5 796l3.5-3.8M897.5 784.5l-3 3.5" stroke="#ddd" stroke-width="1.3"/><path d="M890.3 792.8l1.8-3.8 3-1.8 1.2 1.2-2.2 3z" fill="#ddd"/>
<path d="M902.5 787.8h2.5l3.5-3v10.5l-3.5-3h-2.5z" fill="#ddd"/><path d="M910 786.5c1.5 1.8 1.5 5.2 0 7M911.8 785c2.3 2.8 2.3 7.2 0 10" stroke="#bbb" stroke-width="1" fill="none"/>
<path d="M923 784.5l3 1.9-3 1.9-3-1.9zM929 784.5l3 1.9-3 1.9-3-1.9zM923 788.5l3 1.9-3 1.9-3-1.9zM929 788.5l3 1.9-3 1.9-3-1.9zM926 792l2.8 1.8-2.8 1.8-2.8-1.8z" fill="#f2f2f2"/>
<path d="M946 783.5c2 1.5 4 2 6.3 2-.2 5-1.8 9-6.3 11.3-4.5-2.3-6.1-6.3-6.3-11.3 2.3 0 4.3-.5 6.3-2z" fill="#e2e2e2"/><path d="M943 790l2.3 2.6 4.2-5.4" stroke="#58a018" stroke-width="2" fill="none"/>
<text x="958" y="794" font-size="10.4" fill="#dfe6f0" textLength="23.6" lengthAdjust="spacingAndGlyphs" >22:09</text>
<rect x="987" y="786" width="7" height="5.5" fill="none" stroke="#ddd" stroke-width="1.3"/><rect x="990.5" y="789.5" width="7" height="5.5" fill="#2c2c2c" stroke="#ddd" stroke-width="1.3"/>
</svg>
</body></html>
